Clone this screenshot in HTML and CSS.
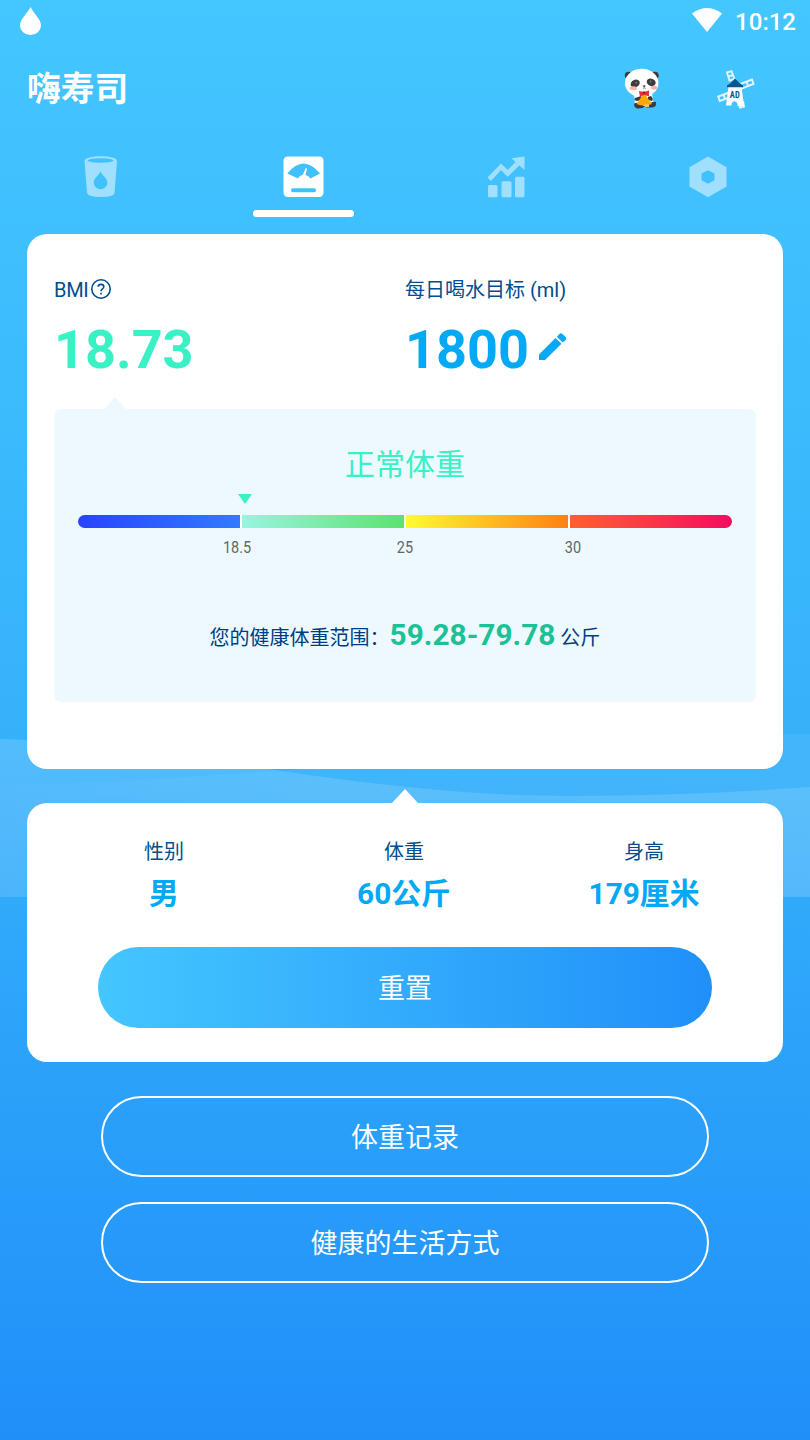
FILE: index.html
```html
<!DOCTYPE html>
<html lang="zh-CN">

<head>
    <meta charset="utf-8">
    <title>嗨寿司</title>
    <link rel="stylesheet" href="styles.css">
</head>

<body>

    <svg class="waves" viewBox="0 0 810 163">
        <defs>
            <linearGradient id="fade" x1="0" y1="0" x2="0" y2="1">
                <stop offset="0" stop-color="#fff" stop-opacity=".15"/>
                <stop offset="1" stop-color="#fff" stop-opacity=".11"/>
            </linearGradient>
            <linearGradient id="fade2" x1="0" y1="0" x2="1" y2="0">
                <stop offset="0" stop-color="#fff" stop-opacity=".02"/>
                <stop offset=".4" stop-color="#fff" stop-opacity=".06"/>
                <stop offset="1" stop-color="#fff" stop-opacity=".07"/>
            </linearGradient>
        </defs>
        <path fill="url(#fade)" d="M0 5C100 8 180 22 275 36C380 52 480 62 570 62C660 62 740 58 810 53V163H0Z"/>
        <path fill="url(#fade2)" d="M0 51C100 50 190 43 275 37C470 20 640 -5 810 0V163H0Z"/>
    </svg>

    <div id="status">
        <svg width="22" height="29" viewBox="0 0 22 29"><path fill="#fff" d="M10.5 0C14 7 21 12 21 18.5A10.5 9.5 0 0 1 0 18.500C0 12 7 7 10.500 0Z"/></svg>
        <div class="right">
            <svg width="30" height="24" viewBox="0 0 30 24"><path fill="#fff" d="M0 5.500Q15-5.500 30 5.500L15 24Z"/></svg>
            <span>10:12</span>
        </div>
    </div>

    <div id="header">
        <h1>嗨寿司</h1>
        <div class="icons">
            <!-- panda -->
            <svg width="36" height="42" viewBox="0 0 36 42">
                <g fill="#3d3b3e">
                    <circle cx="4.500" cy="7.500" r="3.700"/>
                    <circle cx="31" cy="7.500" r="3.700"/>
                </g>
                <path fill="#fff" d="M10 25H28L30 38H11Z"/>
                <ellipse cx="17.700" cy="15" rx="16.800" ry="14.300" fill="#fff"/>
                <g fill="#3d3b3e">
                    <ellipse cx="11.200" cy="15.500" rx="4.800" ry="3.600" transform="rotate(-28 11.200 15.500)"/>
                    <ellipse cx="27.200" cy="14.300" rx="4.600" ry="3.600" transform="rotate(20 27.200 14.300)"/>
                    <ellipse cx="20.200" cy="18" rx="1.500" ry=".8"/>
                    <path d="M11 30L17 28L18 32L13 33Q9 32 11 30ZM24 29L27 28Q30 31 28 33L24 32Z"/>
                    <path d="M10 37Q10 34 15 35L21 38.500Q18 41 13 40.500Q10 39 10 37ZM25 36Q29 33 32 34Q33 39 28 39.500H22Z"/>
                </g>
                <circle cx="12.300" cy="14.700" r="1" fill="#777"/>
                <circle cx="26.600" cy="13.500" r="1" fill="#777"/>
                <g fill="#ffb1ac">
                    <ellipse cx="9.300" cy="20.200" rx="3.700" ry="1.900"/>
                    <ellipse cx="30" cy="19.700" rx="3.300" ry="1.900"/>
                </g>
                <path fill="#ffa900" d="M20 25L12.500 36Q20 39 28 36Z"/>
                <path fill="#f5bd72" d="M21 36H25V39H21Z"/>
                <path fill="#e7323c" d="M15 23L20 24L25 22.500V28.500L20 26.700L16 29Z"/>
                <path fill="#a41e35" d="M18.700 23.500H21.300V26.200H18.700Z"/>
                <path fill="none" stroke="#413b41" stroke-width=".6" d="M20.200 18.500V19.800L18.800 20.500M20.200 19.800L21.800 20.500"/>
            </svg>
            <!-- windmill -->
            <svg class="ad" width="38" height="39" viewBox="0 0 38 39">
                <g fill="none" stroke="#e1f5ff" stroke-width="1.900">
                    <path d="M10 2.500L14.500 1.200L17.500 9L12.500 10.500ZM11.300 6.500L16 5"/>
                    <path d="M23.500 14L35 9.500L36.500 14L25 18.500ZM29.500 11.500L31 16"/>
                    <path d="M12 22.500L1.200 26.500L2.800 31L14 27ZM6.500 24.400L8 29"/>
                    <path d="M21.500 33L23 37.500L27 36.500L26 31"/>
                </g>
                <path fill="#fff" d="M11.500 16.500H24.500L27 36H20.500V33.500Q17 29 14.500 33.500V35.500H9Z"/>
                <path fill="#0c5392" d="M18 8.500Q22 13 26 15.500V17.300H10V15.500Q14.500 13 18 8.500Z"/>
                <text x="17.800" y="27.500" text-anchor="middle">AD</text>
            </svg>
        </div>
    </div>

    <div id="tabs">
        <div class="tab">
            <svg width="34" height="42" viewBox="0 0 34 42"><path fill="#fff" fill-rule="evenodd" d="M.5 5C1-1.200 33-1.200 33 5L30.500 37Q30 41 17 41T3 37ZM3.500 4.500C5 7.500 28 7.500 29.500 4.500C27 1.600 6 1.600 3.500 4.500ZM16.500 15.500C14.500 20 9.700 22 9.700 26.500A6.800 6.800 0 0 0 23.300 26.500C23.300 22 18.500 20 16.500 15.500Z"/></svg>
        </div>
        <div class="tab active">
            <svg width="41" height="42" viewBox="0 0 41 42">
                <path fill="#fff" fill-rule="evenodd" d="M5 .5H36Q40.500 .5 40.500 5V36Q40.500 41 36 41H5Q.5 41 .5 36V5Q.5 .5 5 .5ZM4.300 17.500Q20.500-2.500 37 17.500L27.500 22.500Q26 19.500 22.500 19L24 12.500L22.800 12L19.700 19Q16 19.500 15 22.500ZM10 32.300Q8 32.300 8 34.200T10 36.200H31Q33 36.200 33 34.200T31 32.300Z"/>
            </svg>
        </div>
        <div class="tab">
            <svg width="38" height="42" viewBox="0 0 38 42"><g fill="#fff"><path d="M.5 21.500L14 7.500L20.700 14L28.500 6L24.500 2.200L37.500 .5V14L32.300 9.500L20.700 20.700L14 14L4 25Z"/><rect x="1" y="29" width="9.500" height="12.300" rx="1.500"/><rect x="14.500" y="25.300" width="10" height="16" rx="1.500"/><rect x="28" y="20.700" width="9.500" height="20.600" rx="1.500"/></g></svg>
        </div>
        <div class="tab">
            <svg width="38" height="42" viewBox="0 0 38 42"><path fill="#fff" fill-rule="evenodd" d="M19 .5L37.500 11.300V30.500L19 41.300L.5 30.500V11.300ZM19 14.200L12.500 17.500V24.300L19 27.700L25.500 24.300V17.500Z"/></svg>
        </div>
    </div>

    <div class="card bmi">
        <div class="numbers">
            <div>
                <div class="label"><span class="latin">BMI</span><svg width="20" height="20" viewBox="0 0 20 20"><circle cx="10" cy="10" r="9.200"/><path d="M7.200 7.800C7.200 4.500 12.800 4.500 12.800 7.800C12.800 9.800 10 10 10 12.200M10 13.800V15.500"/></svg></div>
                <div class="big green">18.73</div>
            </div>
            <div>
                <div class="label">每日喝水目标 (ml)</div>
                <div class="big">1800<svg width="28" height="28" viewBox="0 0 28 28"><path fill="#03a9f4" d="M0 21.500L16.500 5L22.500 10.700L6 27H0ZM17.800 3.700L20.500 1Q22-.3 23.500 1L26.500 4Q28 5.500 26.700 6.900L23.800 9.500Z"/></svg></div>
            </div>
        </div>
        <div class="panel">
            <div class="result">正常体重</div>
            <div class="scale">
                <div class="marker"></div>
                <div class="seg blue"></div>
                <div class="seg mint"></div>
                <div class="seg yellow"></div>
                <div class="seg red"></div>
            </div>
            <div class="ticks">
                <span>18.5</span>
                <span>25</span>
                <span>30</span>
            </div>
            <div class="range">您的健康体重范围：<b>59.28-79.78</b> 公斤</div>
        </div>
    </div>

    <div class="card info">
        <div class="stats">
            <div><span>性别</span><b>男</b></div>
            <div><span>体重</span><b>60公斤</b></div>
            <div><span>身高</span><b>179厘米</b></div>
        </div>
        <div class="reset">重置</div>
    </div>

    <div class="outline">体重记录</div>
    <div class="outline">健康的生活方式</div>

</body>
</html>
```
FILE: styles.css
```css
* {
    box-sizing: border-box;
}
body {
    margin: 0;
    height: 1440px;
    position: relative;
    overflow: hidden;
    background: linear-gradient(#44c6ff, #35b1fb 52%, #2090f9);
    font-family: Roboto, "Noto Sans CJK SC", sans-serif;
    color: #004d8f;
}
svg {
    display: block;
    flex: none;
}
.waves {
    position: absolute;
    top: 734px;
    left: 0;
    width: 810px;
    height: 163px;
    z-index: -1;
}
#status {
    display: flex;
    justify-content: space-between;
    height: 44px;
    padding: 7px 14px 0 20px;
}
#status .right {
    display: flex;
    gap: 13px;
    padding-top: 1px;
    color: #fff;
    font-size: 24px;
    font-weight: 500;
    line-height: 28px;
}
#header {
    display: flex;
    justify-content: space-between;
    align-items: center;
    height: 88px;
    padding: 2px 55px 0 27px;
}
h1 {
    margin: 0;
    padding-top: 2px;
    font-size: 33.75px;
    line-height: 50px;
    color: #fff;
}
.icons {
    display: flex;
    align-items: center;
    gap: 57px;
}
.ad text {
    font: bold 8.5px "Roboto Condensed", Roboto, sans-serif;
    fill: #0c5392;
}
#tabs {
    display: flex;
    height: 85px;
    padding-right: 1px;
    margin-bottom: 17px;
}
.tab {
    flex: 1;
    display: flex;
    flex-direction: column;
    align-items: center;
    padding-top: 24px;
}
.tab svg {
    opacity: .5;
}
.tab.active svg {
    opacity: 1;
}
.tab.active::after {
    content: "";
    width: 101px;
    height: 7px;
    margin-top: 12px;
    border-radius: 4px;
    background: #fff;
}
.card {
    margin: 0 27px 34px;
    border-radius: 20px;
    background: #fff;
}
.bmi {
    height: 535px;
    padding: 41px 27px 0;
}
.numbers {
    display: flex;
    height: 134px;
}
.numbers > div {
    flex: 1;
}
.label {
    display: flex;
    align-items: center;
    gap: 3px;
    font-size: 20px;
    line-height: 30px;
}
.latin {
    letter-spacing: -.3px;
}
.label svg {
    margin-top: -2px;
    fill: none;
    stroke: #004d8f;
    stroke-width: 1.600;
}
.big {
    display: flex;
    gap: 10px;
    align-items: center;
    margin-top: 13px;
    font-size: 54px;
    font-weight: bold;
    line-height: 64px;
    color: #03a9f4;
}
.big svg {
    margin-bottom: 6px;
}
.green {
    color: #39f1c5;
}
.panel {
    position: relative;
    height: 293px;
    padding: 34px 24px 0;
    border-radius: 7px;
    background: #edf9ff;
}
.panel::before {
    content: "";
    position: absolute;
    top: -12px;
    left: 50px;
    border: 11px solid transparent;
    border-top: 0;
    border-bottom: 12px solid #edf9ff;
}
.result {
    font-size: 30px;
    line-height: 44px;
    text-align: center;
    color: #39f1c5;
}
.scale {
    position: relative;
    display: flex;
    gap: 2px;
    height: 13px;
    margin-top: 28px;
    border-radius: 7px;
    background: #fff;
}
.seg {
    flex: 1;
}
.blue {
    border-radius: 7px 0 0 7px;
    background: linear-gradient(90deg, #2843ff, #317bff);
}
.mint {
    background: linear-gradient(90deg, #98f4e1, #5ce36d);
}
.yellow {
    background: linear-gradient(90deg, #fffb33, #ff8014);
}
.red {
    border-radius: 0 7px 7px 0;
    background: linear-gradient(90deg, #ff6030, #f40c60);
}
.marker {
    position: absolute;
    top: -21px;
    left: 160px;
    border: 7px solid transparent;
    border-bottom: 0;
    border-top: 10px solid #39f1c5;
}
.ticks {
    display: flex;
    justify-content: center;
    margin-top: 9px;
    font-size: 17px;
    line-height: 20px;
    color: #666;
}
.ticks span {
    width: 168px;
    text-align: center;
    transform: scaleX(.85);
}
.range {
    margin-top: 60px;
    font-size: 20px;
    line-height: 36px;
    text-align: center;
    white-space: nowrap;
    color: #003c85;
}
.range b {
    font-size: 29.800px;
    color: #1cc195;
}
.info {
    position: relative;
    height: 259px;
    padding: 34px 17px 0;
}
.info::before {
    content: "";
    position: absolute;
    top: -14px;
    left: 365px;
    border: 13px solid transparent;
    border-top: 0;
    border-bottom: 14px solid #fff;
}
.stats {
    display: flex;
    height: 110px;
    margin-right: 2px;
}
.stats div {
    flex: 1;
    text-align: center;
}
.stats span, .stats b {
    display: block;
}
.stats span {
    font-size: 20px;
    line-height: 30px;
}
.stats b {
    margin-top: 5px;
    font-size: 29.800px;
    line-height: 44px;
    color: #03a9f4;
}
.reset, .outline {
    height: 81px;
    padding-top: 2px;
    border-radius: 41px;
    font-size: 27px;
    line-height: 81px;
    text-align: center;
    color: #fff;
}
.reset {
    margin: 0 54px;
    background: linear-gradient(90deg, #44c6ff, #2090f9);
}
.outline {
    margin: 0 101px 25px;
    border: 2px solid #fff;
    line-height: 77px;
}
```
